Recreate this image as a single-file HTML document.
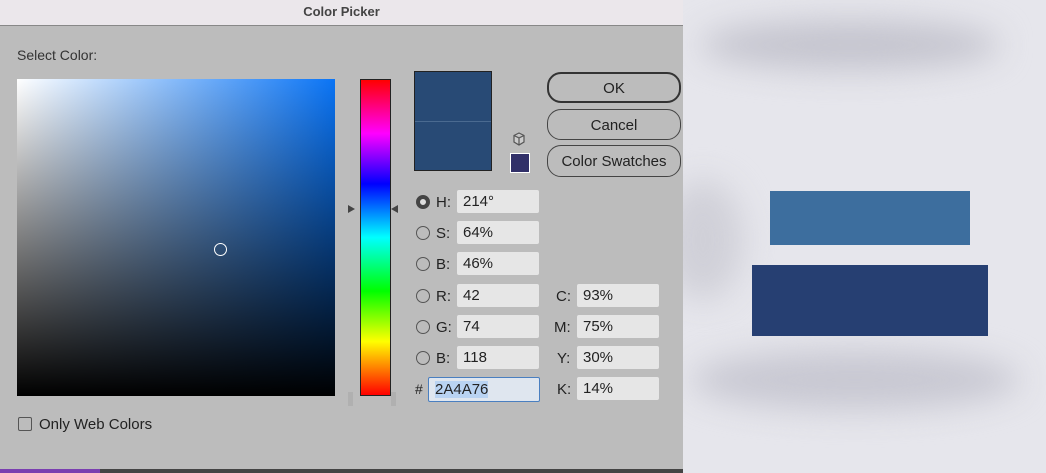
<!DOCTYPE html>
<html><head><style>
body{margin:0;width:1046px;height:473px;overflow:hidden;position:relative;font-family:"Liberation Sans",sans-serif;background:#bcbcbc}
.a{position:absolute}
.t{color:#222;font-size:15px}
.f{position:absolute;background:#e6e6e6;border-radius:2px;height:23px;font-size:15px;line-height:24px;padding-left:6px;box-sizing:border-box;color:#222}
.r{position:absolute;width:14px;height:14px;border:1px solid #555;border-radius:50%;box-sizing:border-box}
.btn{position:absolute;left:547px;width:134px;border:1.5px solid #444;border-radius:14px;box-sizing:border-box;text-align:center;font-size:15px;color:#222}
</style></head><body>
<div class="a" style="left:0;top:0;width:683px;height:25px;background:#ebe7eb;border-bottom:1px solid #888"></div>
<div class="a" style="left:0;top:4px;width:683px;text-align:center;font-weight:bold;font-size:13px;color:#444">Color Picker</div>
<div class="a t" style="left:17px;top:47px;font-size:14px;color:#333">Select Color:</div>
<div class="a" style="left:17px;top:79px;width:318px;height:317px;background:linear-gradient(to bottom,rgba(0,0,0,0),#000),linear-gradient(to right,#fff,#0a74f5)"></div>
<div class="a" style="left:214px;top:243px;width:11px;height:11px;border:1.3px solid #fff;border-radius:50%"></div>
<div class="a" style="left:360px;top:79px;width:31px;height:317px;box-sizing:border-box;border:1px solid #222;background:linear-gradient(to bottom,#f00,#f0f 17%,#00f 33%,#0ff 50%,#0f0 67%,#ff0 83%,#f00)"></div>
<div class="a" style="left:348px;top:205px;width:0;height:0;border-left:7px solid #444;border-top:4px solid transparent;border-bottom:4px solid transparent"></div>
<div class="a" style="left:391px;top:205px;width:0;height:0;border-right:7px solid #444;border-top:4px solid transparent;border-bottom:4px solid transparent"></div>
<div class="a" style="left:348px;top:392px;width:5px;height:14px;background:#b0b0b0"></div>
<div class="a" style="left:391px;top:392px;width:5px;height:14px;background:#b0b0b0"></div>
<div class="a" style="left:414px;top:71px;width:78px;height:100px;background:#284a75;border:1px solid #222;box-sizing:border-box"></div>
<div class="a" style="left:415px;top:121px;width:76px;height:1px;background:#4a6a90"></div>
<svg class="a" style="left:511px;top:131px" width="16" height="16" viewBox="0 0 16 16"><path d="M8 2 L13 4.5 L13 11 L8 14 L3 11 L3 4.5 Z M3 4.5 L8 7 L13 4.5 M8 7 L8 14" fill="#ccc" stroke="#555" stroke-width="1.2"/></svg>
<div class="a" style="left:510px;top:153px;width:20px;height:20px;background:#302f68;border:1.5px solid #fff;box-sizing:border-box"></div>
<div class="btn" style="top:72px;height:31px;line-height:30px;border:2.5px solid #333">OK</div>
<div class="btn" style="top:109px;height:31px;line-height:31px">Cancel</div>
<div class="btn" style="top:145px;height:32px;line-height:32px">Color Swatches</div>
<div class="r" style="left:416px;top:195px;border:4px solid #444;background:#ddd"></div>
<div class="r" style="left:416px;top:226px"></div><div class="r" style="left:416px;top:257px"></div>
<div class="r" style="left:416px;top:289px"></div><div class="r" style="left:416px;top:320px"></div><div class="r" style="left:416px;top:351px"></div>
<div class="a t" style="left:436px;top:194px">H:</div><div class="a t" style="left:436px;top:225px">S:</div><div class="a t" style="left:436px;top:256px">B:</div>
<div class="a t" style="left:436px;top:288px">R:</div><div class="a t" style="left:436px;top:319px">G:</div><div class="a t" style="left:436px;top:350px">B:</div>
<div class="a t" style="left:415px;top:381px;font-size:14px">#</div>
<div class="f" style="left:457px;top:190px;width:82px">214°</div>
<div class="f" style="left:457px;top:221px;width:82px">64%</div>
<div class="f" style="left:457px;top:252px;width:82px">46%</div>
<div class="f" style="left:457px;top:284px;width:82px">42</div>
<div class="f" style="left:457px;top:315px;width:82px">74</div>
<div class="f" style="left:457px;top:346px;width:82px">118</div>
<div class="f" style="left:428px;top:377px;width:112px;height:25px;border:1.5px solid #4a7fc0;background:#dfe6ef;padding-left:6px"><span style="background:#b9d3f2">2A4A76</span></div>
<div class="a t" style="left:556px;top:288px">C:</div><div class="a t" style="left:554px;top:319px">M:</div><div class="a t" style="left:557px;top:350px">Y:</div><div class="a t" style="left:557px;top:381px">K:</div>
<div class="f" style="left:577px;top:284px;width:82px">93%</div>
<div class="f" style="left:577px;top:315px;width:82px">75%</div>
<div class="f" style="left:577px;top:346px;width:82px">30%</div>
<div class="f" style="left:577px;top:377px;width:82px">14%</div>
<div class="a" style="left:18px;top:417px;width:14px;height:14px;border:1px solid #555;border-radius:2px;box-sizing:border-box"></div>
<div class="a t" style="left:39px;top:416px">Only Web Colors</div>
<div class="a" style="left:0;top:469px;width:683px;height:4px;background:#444"></div>
<div class="a" style="left:0;top:469px;width:100px;height:4px;background:#7a3fb0"></div>
<div class="a" style="left:683px;top:0;width:363px;height:473px;background:#e6e6ec;overflow:hidden">
<div class="a" style="left:17px;top:20px;width:300px;height:50px;background:#c4c4ce;border-radius:50%;filter:blur(16px)"></div>
<div class="a" style="left:-20px;top:180px;width:80px;height:120px;background:#d0d0d8;border-radius:50%;filter:blur(16px)"></div>
<div class="a" style="left:7px;top:350px;width:330px;height:60px;background:#c8c8d2;border-radius:50%;filter:blur(16px)"></div>
<div class="a" style="left:87px;top:191px;width:200px;height:54px;background:#3d6e9e"></div>
<div class="a" style="left:69px;top:265px;width:236px;height:71px;background:#263f72"></div>
</div>
</body></html>
